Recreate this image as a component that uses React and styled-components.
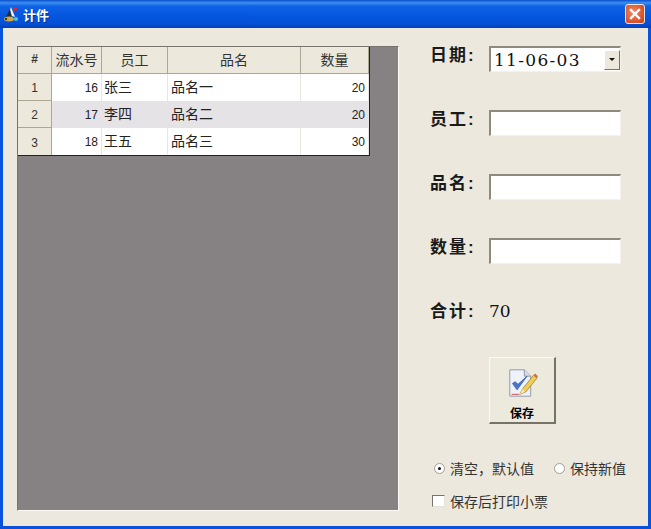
import React from "react";
import styled, { createGlobalStyle } from "styled-components";

const cjk = `"Liberation Sans", "Noto Sans CJK SC", sans-serif`;
const serif = `"DejaVu Serif", "Noto Sans CJK SC", serif`;

const GlobalStyle = createGlobalStyle`
  html, body {
    margin: 0;
    padding: 0;
    background: #ece9dd;
  }
  * {
    box-sizing: border-box;
  }
`;

const Window = styled.div`
  width: 651px;
  height: 529px;
  display: flex;
  flex-direction: column;
  overflow: hidden;
  background: #0a52dc;
  font-family: ${cjk};
  color: #111;
`;

const TitleBar = styled.div`
  height: 28px;
  flex: none;
  display: flex;
  align-items: center;
  padding: 0 6px 0 3px;
  background: linear-gradient(
    180deg,
    #0a4fd0 0%,
    #3d8ff0 10%,
    #0f62e6 22%,
    #0455dd 60%,
    #0450d6 85%,
    #033fb4 100%
  );
`;

const TitleText = styled.span`
  margin-left: 2px;
  font-size: 13px;
  font-weight: 700;
  color: #fff;
  text-shadow: 1px 1px 0 #0a2f8c;
`;

const CloseButton = styled.div`
  width: 20px;
  height: 20px;
  margin-left: auto;
  display: flex;
  align-items: center;
  justify-content: center;
  border: 1px solid #f4e4dc;
  border-radius: 3px;
  background: radial-gradient(circle at 40% 40%, #ee8a66 0%, #df5b35 55%, #c23d1c 100%);
`;

const Body = styled.div`
  flex: 1;
  margin: 0 3px 3px 3px;
  display: flex;
  padding: 18px 0 15px 14px;
  background: #ece8dd;
`;

const GridPanel = styled.div`
  width: 382px;
  height: 465px;
  flex: none;
  background: #868284;
  border-top: 1px solid #77736f;
  border-left: 1px solid #77736f;
  border-bottom: 1px solid #fbfaf5;
  border-right: 1px solid #fbfaf5;
`;

const Table = styled.div`
  width: 352px;
  display: grid;
  grid-template-columns: 34px 50px 66px 133px 68px;
  background: #fff;
  border-right: 1px solid #222;
  border-bottom: 1px solid #222;
`;

const HeadCell = styled.div`
  height: 27px;
  display: flex;
  align-items: center;
  justify-content: center;
  padding-bottom: 2px;
  font-size: ${(props) => (props.$small ? "12px" : "14px")};
  font-weight: ${(props) => (props.$small ? 700 : 400)};
  color: #333;
  background: #ece9dc;
  border-right: 1px solid #aaa795;
  border-bottom: 1px solid #aaa795;
`;

const RowHead = styled.div`
  height: 27px;
  display: flex;
  align-items: center;
  justify-content: center;
  padding-top: 2px;
  font-size: 12px;
  color: #333;
  background: #ece9dc;
  border-right: 1px solid #aaa795;
  border-bottom: ${(props) => (props.$last ? "none" : "1px solid #aaa795")};
`;

const Cell = styled.div`
  height: 27px;
  display: flex;
  align-items: center;
  justify-content: ${(props) => (props.$right ? "flex-end" : "flex-start")};
  padding: ${(props) => (props.$right ? "1px 3px 0 0" : `0 0 3px ${props.$inset || 2}px`)};
  font-size: ${(props) => (props.$right ? "12px" : "14px")};
  color: #222;
  background: ${(props) => (props.$alt ? "#e6e3e6" : "#fff")};
  border-right: 1px solid ${(props) => (props.$alt ? "#e6e3e6" : "#e8e6e0")};
`;

const SidePanel = styled.div`
  flex: 1;
  min-width: 0;
  display: flex;
  flex-direction: column;
  padding-left: 31px;
`;

const FieldRow = styled.div`
  height: 64px;
  flex: none;
  display: flex;
  align-items: flex-start;
`;

const FieldLabel = styled.div`
  width: 59px;
  height: 15px;
  flex: none;
  display: flex;
  align-items: center;
  white-space: nowrap;
  font-size: 17px;
  font-weight: 700;
  letter-spacing: 2px;
  color: #1a1a1a;
`;

const Input = styled.div`
  width: 132px;
  height: 26px;
  flex: none;
  background: #fff;
  border-top: 2px solid #8d8a7e;
  border-left: 2px solid #8d8a7e;
  border-right: 1px solid #f4f2ea;
  border-bottom: 1px solid #f4f2ea;
`;

const Combo = styled(Input)`
  display: flex;
  align-items: center;
  justify-content: space-between;
  padding-left: 3px;
  font-family: ${serif};
  font-size: 17px;
  letter-spacing: 1.3px;
  color: #111;
`;

const ComboArrow = styled.div`
  width: 16px;
  height: 20px;
  display: flex;
  align-items: center;
  justify-content: center;
  background: #ece9dc;
  border-right: 1px solid #77736a;
  border-bottom: 1px solid #77736a;
  border-top: 1px solid #fff;
  border-left: 1px solid #fff;

  &::after {
    content: "";
    border-left: 3px solid transparent;
    border-right: 3px solid transparent;
    border-top: 3px solid #111;
  }
`;

const TotalRow = styled.div`
  height: 55px;
  flex: none;
  display: flex;
  align-items: flex-start;
`;

const TotalValue = styled.span`
  height: 18px;
  display: flex;
  align-items: center;
  font-family: ${serif};
  font-size: 17px;
`;

const SaveButton = styled.div`
  width: 67px;
  height: 67px;
  flex: none;
  margin-left: 59px;
  display: flex;
  flex-direction: column;
  align-items: center;
  padding-top: 10px;
  gap: 6px;
  font-size: 12px;
  font-weight: 700;
  color: #000;
  background: #ece9dd;
  border-top: 1px solid #fbfaf5;
  border-left: 1px solid #fbfaf5;
  border-right: 2px solid #77736a;
  border-bottom: 2px solid #77736a;
`;

const OptionRow = styled.div`
  display: flex;
  align-items: center;
  height: 20px;
  flex: none;
  margin-top: ${(props) => props.$top}px;
  font-size: 14px;
  color: #333;
`;

const Option = styled.label`
  display: flex;
  align-items: center;
  gap: 5px;
  margin-left: ${(props) => props.$left || 0}px;
  white-space: nowrap;
`;

const Radio = styled.span`
  width: 11px;
  height: 11px;
  flex: none;
  display: flex;
  align-items: center;
  justify-content: center;
  border-radius: 50%;
  background: #fff;
  border: 1px solid #a09d90;

  &::after {
    content: "";
    width: 3px;
    height: 3px;
    border-radius: 50%;
    background: ${(props) => (props.$checked ? "#111" : "transparent")};
  }
`;

const Checkbox = styled.span`
  width: 13px;
  height: 12px;
  flex: none;
  background: #fff;
  border-top: 1px solid #77736a;
  border-left: 1px solid #77736a;
  border-right: 1px solid #e6e3d8;
  border-bottom: 1px solid #e6e3d8;
`;

const columns = ["流水号", "员工", "品名", "数量"];

const rows = [
  { id: 1, serial: 16, name: "张三", item: "品名一", qty: 20 },
  { id: 2, serial: 17, name: "李四", item: "品名二", qty: 20 },
  { id: 3, serial: 18, name: "王五", item: "品名三", qty: 30 },
];

const AppIcon = () => (
  <svg width="18" height="18" viewBox="0 0 18 18">
    <path d="M8 2 L12 12 L9 11 L7 5 Z" fill="#f4f4ee" />
    <path d="M7 4 L3 12 L8 12 Z" fill="#2b2b20" />
    <circle cx="12" cy="4" r="2" fill="#d8262a" />
    <ellipse cx="6" cy="14" rx="5" ry="2.5" fill="#c9a94a" />
    <circle cx="13" cy="14" r="2" fill="#55c4d8" />
    <circle cx="3" cy="14" r="1.2" fill="#3a3a2a" />
  </svg>
);

const CloseIcon = () => (
  <svg width="12" height="12" viewBox="0 0 12 12">
    <path d="M2 2 L10 10 M10 2 L2 10" stroke="#fff" strokeWidth="2.4" strokeLinecap="square" />
  </svg>
);

const SaveIcon = () => (
  <svg width="31" height="30" viewBox="0 0 34 33">
    <path d="M3 2 H19 L26 9 V31 H3 Z" fill="#eef2fb" stroke="#8d93a3" />
    <path d="M19 2 V9 H26" fill="#d4dbea" stroke="#8d93a3" />
    <path d="M6 17 L11 24 L22 9 L12 18 L9 15 Z" fill="#4a78d0" stroke="#2f55a8" strokeWidth="0.8" />
    <path d="M14 29 L17 23 L29 8 L33 11 L21 26 Z" fill="#f0cc58" stroke="#9a7a2a" strokeWidth="0.8" />
    <path d="M29 8 L33 11 L34 9 L31 6 Z" fill="#d9694f" />
    <path d="M14 29 L17 23 L20 26 Z" fill="#f6e3bd" />
    <path d="M5 29 H13" stroke="#c04a4a" />
  </svg>
);

const App = () => {
  return (
    <Window>
      <GlobalStyle />
      <TitleBar>
        <AppIcon />
        <TitleText>计件</TitleText>
        <CloseButton>
          <CloseIcon />
        </CloseButton>
      </TitleBar>
      <Body>
        <GridPanel>
          <Table>
            <HeadCell $small>#</HeadCell>
            {columns.map((col) => (
              <HeadCell key={col}>{col}</HeadCell>
            ))}
            {rows.map((row, index) => (
              <React.Fragment key={row.id}>
                <RowHead $last={index === rows.length - 1}>{row.id}</RowHead>
                <Cell $right $alt={index === 1}>{row.serial}</Cell>
                <Cell $alt={index === 1}>{row.name}</Cell>
                <Cell $alt={index === 1} $inset={3}>{row.item}</Cell>
                <Cell $right $alt={index === 1}>{row.qty}</Cell>
              </React.Fragment>
            ))}
          </Table>
        </GridPanel>
        <SidePanel>
          <FieldRow>
            <FieldLabel>日期:</FieldLabel>
            <Combo>
              11-06-03
              <ComboArrow />
            </Combo>
          </FieldRow>
          <FieldRow>
            <FieldLabel>员工:</FieldLabel>
            <Input />
          </FieldRow>
          <FieldRow>
            <FieldLabel>品名:</FieldLabel>
            <Input />
          </FieldRow>
          <FieldRow>
            <FieldLabel>数量:</FieldLabel>
            <Input />
          </FieldRow>
          <TotalRow>
            <FieldLabel>合计:</FieldLabel>
            <TotalValue>70</TotalValue>
          </TotalRow>
          <SaveButton>
            <SaveIcon />
            保存
          </SaveButton>
          <OptionRow $top={34}>
            <Option $left={4}>
              <Radio $checked />
              清空，默认值
            </Option>
            <Option $left={20}>
              <Radio />
              保持新值
            </Option>
          </OptionRow>
          <OptionRow $top={13}>
            <Option $left={2}>
              <Checkbox />
              保存后打印小票
            </Option>
          </OptionRow>
        </SidePanel>
      </Body>
    </Window>
  );
};

export default App;
